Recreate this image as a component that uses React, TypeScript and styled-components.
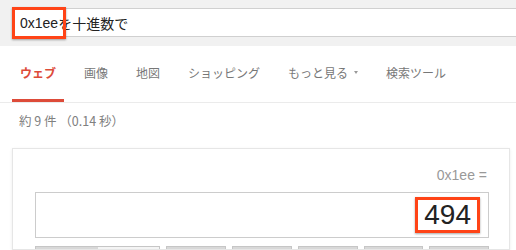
import React from "react";
import styled, { createGlobalStyle } from "styled-components";

const GlobalStyle = createGlobalStyle`
  html, body {
    margin: 0;
    padding: 0;
    background: #ffffff;
    font-family: "Liberation Sans", Arial, "Noto Sans CJK JP", sans-serif;
  }
`;

const Header = styled("div")`
  background: #f1f1f1;
  height: 46px;
  padding-top: 8px;
  box-sizing: border-box;
`;

const SearchBox = styled("div")`
  margin-left: 13px;
  height: 27px;
  background: #fff;
  border-top: 1px solid #d0d0d0;
  border-bottom: 1px solid #d0d0d0;
  display: flex;
  align-items: center;
  padding-left: 7px;
  font-size: 14px;
  color: #222;
`;

const QueryRest = styled("span")`
  font-family: "Noto Sans CJK JP", sans-serif;
`;

// red annotation frame drawn over the highlighted text
const Mark = styled("span")<{ $px: number; $py: number }>`
  position: relative;
  &::after {
    content: "";
    position: absolute;
    left: ${(p) => -p.$px}px;
    right: ${(p) => -p.$px}px;
    top: ${(p) => -p.$py}px;
    bottom: ${(p) => -p.$py}px;
    border: 3px solid #ff4417;
    box-shadow: 0 1px 2px rgba(0, 0, 0, 0.35);
  }
`;

const Tabs = styled("nav")`
  display: flex;
  gap: 12px;
  padding-left: 12px;
  height: 56px;
  border-bottom: 1px solid #ebebeb;
  font-family: "Noto Sans CJK JP", sans-serif;
  font-size: 12px;
`;

const Tab = styled("div")<{ $active?: boolean }>`
  display: flex;
  align-items: center;
  gap: 6px;
  padding: 0 8px;
  box-sizing: border-box;
  color: ${(p) => (p.$active ? "#dd4b39" : "#777")};
  font-weight: ${(p) => (p.$active ? 700 : 400)};
  border-bottom: 3px solid ${(p) => (p.$active ? "#dd4b39" : "transparent")};
`;

const Caret = styled("span")`
  width: 0;
  height: 0;
  border-left: 2.5px solid transparent;
  border-right: 2.5px solid transparent;
  border-top: 3px solid #999;
`;

const Stats = styled("div")`
  padding: 8px 0 0 19px;
  height: 45px;
  box-sizing: border-box;
  font-family: "Noto Sans CJK JP", sans-serif;
  font-size: 12.5px;
  color: #808080;
`;

const Card = styled("div")`
  margin-left: 12px;
  width: 498px;
  background: #fff;
  border: 1px solid #e6e6e6;
  box-shadow: 0 1px 3px rgba(0, 0, 0, 0.08);
  padding: 18px 20px 0 22px;
  box-sizing: border-box;
  height: 102px;
  overflow: hidden;
`;

const Expr = styled("div")`
  text-align: right;
  font-size: 14px;
  color: #999;
  padding-right: 2px;
  height: 25px;
`;

const Display = styled("div")`
  height: 46px;
  border: 1px solid #ccc;
  box-sizing: border-box;
  display: flex;
  align-items: center;
  justify-content: flex-end;
  padding-right: 17px;
  font-size: 28px;
  color: #222;
`;

const Keys = styled("div")`
  display: flex;
  gap: 6px;
  margin-top: 8px;
`;

const Key = styled("div")<{ $wide?: boolean }>`
  width: ${(p) => (p.$wide ? 126 : 60)}px;
  height: 24px;
  box-sizing: border-box;
  border: 1px solid #c6c6c6;
  background: #d8d8d8;
  display: flex;
`;

const Half = styled("div")<{ $on?: boolean }>`
  flex: 1;
  background: ${(p) => (p.$on ? "#d8d8d8" : "#f4f4f4")};
`;

const tabs = ["画像", "地図", "ショッピング"];

export default function App() {
  return (
    <>
      <GlobalStyle />
      <Header>
        <SearchBox>
          <Mark $px={8} $py={8}>0x1ee</Mark>
          <QueryRest>を十進数で</QueryRest>
        </SearchBox>
      </Header>
      <Tabs>
        <Tab $active>ウェブ</Tab>
        {tabs.map((t) => (
          <Tab key={t}>{t}</Tab>
        ))}
        <Tab>
          もっと見る
          <Caret />
        </Tab>
        <Tab>検索ツール</Tab>
      </Tabs>
      <Stats>約 9 件 （0.14 秒）</Stats>
      <Card>
        <Expr>0x1ee =</Expr>
        <Display>
          <Mark $px={9} $py={2}>494</Mark>
        </Display>
        <Keys>
          <Key $wide>
            <Half $on />
            <Half />
          </Key>
          <Key />
          <Key />
          <Key />
          <Key />
          <Key />
        </Keys>
      </Card>
    </>
  );
}
